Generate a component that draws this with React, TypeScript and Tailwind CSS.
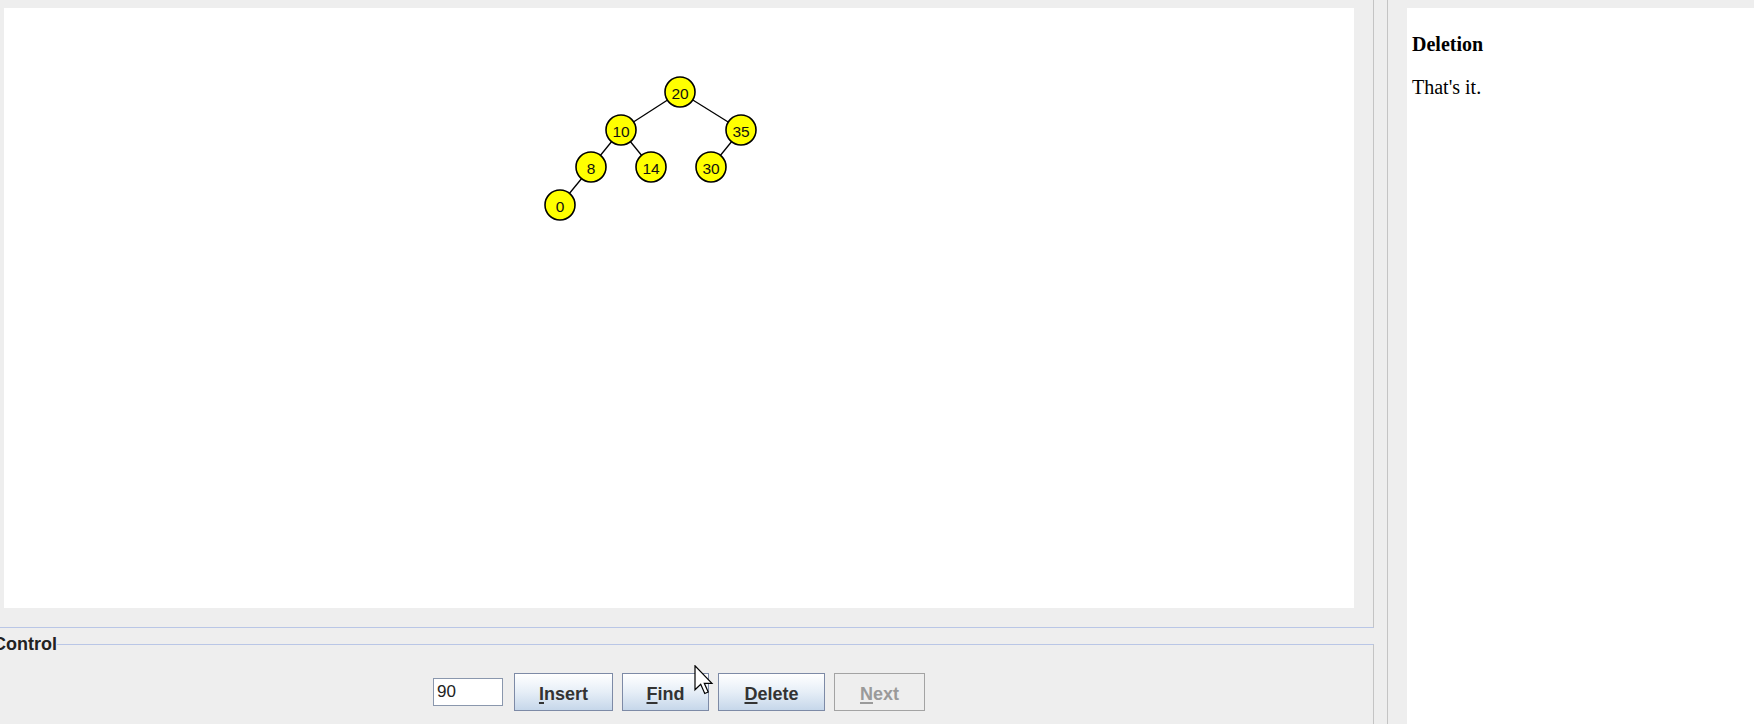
import React from 'react';

type TreeNode = { key: string; x: number; y: number; parent?: string };

// node centres, relative to the white canvas
const nodes: TreeNode[] = [
  { key: '20', x: 676, y: 84 },
  { key: '10', x: 617, y: 122, parent: '20' },
  { key: '35', x: 737, y: 122, parent: '20' },
  { key: '8', x: 587, y: 159, parent: '10' },
  { key: '14', x: 647, y: 159, parent: '10' },
  { key: '30', x: 707, y: 159, parent: '35' },
  { key: '0', x: 556, y: 197, parent: '8' },
];

const TreeCanvas = () => {
  const byKey = Object.fromEntries(nodes.map((n) => [n.key, n]));
  return (
    <svg width={1350} height={600} className="block">
      {nodes
        .filter((n) => n.parent)
        .map((n) => {
          const p = byKey[n.parent as string];
          return <line key={'l' + n.key} x1={p.x} y1={p.y} x2={n.x} y2={n.y} stroke="#000" strokeWidth={1.3} />;
        })}
      {nodes.map((n) => (
        <g key={n.key}>
          <circle cx={n.x} cy={n.y} r={15} fill="#ffff00" stroke="#000" strokeWidth={1.6} />
          <text
            x={n.x}
            y={n.y + 1}
            textAnchor="middle"
            dominantBaseline="central"
            fontSize={15.5}
            fill="#111111"
            fontFamily='"Liberation Sans", Arial, sans-serif'
          >
            {n.key}
          </text>
        </g>
      ))}
    </svg>
  );
};

const SwingButton = ({ label, width, disabled }: { label: string; width: string; disabled?: boolean }) => (
  <button
    className={
      disabled
        ? `${width} h-[38px] pt-[3px] border border-[#a3a3a3] bg-[#eeeeee] text-[#9a9a9a] font-bold text-[18px] leading-none`
        : `${width} h-[38px] pt-[3px] border border-[#7d8aa6] bg-linear-to-b from-[#ffffff] via-[#e6eef7] to-[#c6d7ea] text-[#333333] font-bold text-[18px] leading-none`
    }
  >
    <span className="underline underline-offset-[2px] decoration-[1.5px]">{label[0]}</span>
    {label.slice(1)}
  </button>
);

const Cursor = () => (
  <svg width={20} height={30} viewBox="0 0 13 20" className="absolute left-[694px] top-[665px]">
    <path
      d="M0.5 0.5 L0.5 16.5 L4.3 12.9 L7 19 L9.3 18 L6.7 12.2 L11.8 12.2 Z"
      fill="#fff"
      stroke="#000"
      strokeWidth={0.8}
      strokeLinejoin="miter"
    />
  </svg>
);

export default function App() {
  return (
    <div
      className="relative w-[1754px] h-[724px] bg-[#eeeeee] overflow-hidden flex"
      style={{ fontFamily: '"Liberation Sans", Arial, sans-serif' }}
    >
      {/* Left: canvas + controls */}
      <div className="w-[1374px] flex flex-col shrink-0">
        <div className="h-[628px] border-r border-b border-r-[#c4c4c4] border-b-[#b9c6e6] pt-[8px] pl-[4px]">
          <div className="w-[1350px] h-[600px] bg-white">
            <TreeCanvas />
          </div>
        </div>

        <fieldset className="mt-[6px] h-[90px] border-t border-r border-l-0 border-b-0 border-t-[#b9c6e6] border-r-[#c4c4c4] p-0 m-0 min-w-0">
          <legend className="-ml-[7px] px-0 text-[18px] leading-[20px] font-bold text-[#222222]">Control</legend>
          <div className="mt-[19px] flex items-center justify-center pr-[15px] gap-[9px]">
            <input
              defaultValue="90"
              className="w-[70px] h-[28px] mr-[2px] border border-[#8a97ad] bg-white px-[3px] text-[17px] text-[#222222] outline-none"
            />
            <SwingButton label="Insert" width="w-[99px]" />
            <SwingButton label="Find" width="w-[87px]" />
            <SwingButton label="Delete" width="w-[107px]" />
            <SwingButton label="Next" width="w-[91px]" disabled />
          </div>
        </fieldset>
      </div>

      {/* split divider */}
      <div className="w-[14px] shrink-0 border-r border-[#c4c4c4]" />
      <div className="w-[19px] shrink-0" />

      {/* Right: description pane */}
      <div
        className="flex-1 mt-[8px] bg-white pl-[5px] pt-[25px] text-black"
        style={{ fontFamily: '"Liberation Serif", "Times New Roman", serif' }}
      >
        <h3 className="text-[20px] leading-[23px] font-bold">Deletion</h3>
        <p className="mt-[20px] text-[20px] leading-[23px]">That's it.</p>
      </div>

      <Cursor />
    </div>
  );
}
